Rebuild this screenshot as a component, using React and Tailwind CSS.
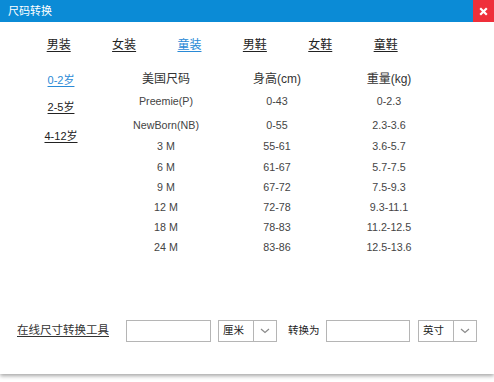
import React from 'react';

const tabs = ['男装', '女装', '童装', '男鞋', '女鞋', '童鞋'];
const ages = [
    ['0-2岁', 'h-[20px]'],
    ['2-5岁', 'h-[34px]'],
    ['4-12岁', 'h-[24px]'],
];

// [size, height, weight, row height]
const rows = [
    ['Preemie(P)', '0-43', '0-2.3', 'h-[25px]'],
    ['NewBorn(NB)', '0-55', '2.3-3.6', 'h-[22px]'],
    ['3 M', '55-61', '3.6-5.7', 'h-[21px]'],
    ['6 M', '61-67', '5.7-7.5', 'h-[20px]'],
    ['9 M', '67-72', '7.5-9.3', 'h-[20px]'],
    ['12 M', '72-78', '9.3-11.1', 'h-[20px]'],
    ['18 M', '78-83', '11.2-12.5', 'h-[20px]'],
    ['24 M', '83-86', '12.5-13.6', 'h-[20px]'],
];

const font = { fontFamily: '"Liberation Sans", "Noto Sans CJK SC", sans-serif' };

const Chevron = () => (
    <svg width="10" height="6" viewBox="0 0 10 6" fill="none">
        <path d="M1 1l4 3.5L9 1" stroke="#8a8a8a" strokeWidth="1.2" />
    </svg>
);

const Select = ({ label }) => (
    <div className="flex h-[22px] w-[59px] border border-[#b5b5b5] bg-white">
        <div className="flex w-[35px] items-center border-r border-[#b5b5b5] pl-[4px] text-[10.5px] text-[#222]">
            {label}
        </div>
        <div className="flex flex-1 items-center justify-center">
            <Chevron />
        </div>
    </div>
);

const App = () => {
    return (
        <div className="h-[382px] w-[494px] bg-white" style={font}>
            <div className="flex h-[374px] flex-col bg-white shadow-[0_2px_4px_rgba(0,0,0,0.35)]">
                {/* Title bar */}
                <div className="flex h-[22px] items-center bg-[#0b8bd6]">
                    <span className="flex-1 pl-[8px] text-[11px] text-white">尺码转换</span>
                    <div className="flex h-[22px] w-[21px] items-center justify-center bg-[#ef2f3a]">
                        <svg width="9" height="9" viewBox="0 0 9 9">
                            <path d="M1.2 1.2l6.6 6.6M7.8 1.2L1.2 7.8" stroke="#fff" strokeWidth="2.2" />
                        </svg>
                    </div>
                </div>

                {/* Category tabs */}
                <div className="mt-[15px] flex h-[16px] pl-[26px]">
                    {tabs.map((t) => (
                        <div key={t} className="flex w-[65.4px] justify-center">
                            <span
                                className={`text-[12px] leading-[16px] underline underline-offset-2 ${
                                    t === '童装' ? 'text-[#2a8ad6]' : 'text-[#222]'
                                }`}
                            >
                                {t}
                            </span>
                        </div>
                    ))}
                </div>

                {/* Body */}
                <div className="mt-[16px] flex">
                    <div className="flex w-[122px] flex-col items-center pt-[1px]">
                        {ages.map(([a, h], i) => (
                            <div key={a} className={`flex items-center ${h}`}>
                                <span
                                    className={`text-[11px] underline underline-offset-2 ${
                                        i === 0 ? 'text-[#2a8ad6]' : 'text-[#222]'
                                    }`}
                                >
                                    {a}
                                </span>
                            </div>
                        ))}
                    </div>

                    <div className="flex flex-col text-[#444]">
                        <div className="flex h-[20px] items-center text-[12px] text-[#333]">
                            <div className="w-[88px] text-center">美国尺码</div>
                            <div className="w-[134px] text-center">身高(cm)</div>
                            <div className="w-[90px] text-center">重量(kg)</div>
                        </div>
                        {rows.map(([s, h, w, rh]) => (
                            <div key={s} className={`flex items-center text-[10.7px] ${rh}`}>
                                <div className="w-[88px] text-center">{s}</div>
                                <div className="w-[134px] text-center">{h}</div>
                                <div className="w-[90px] text-center">{w}</div>
                            </div>
                        ))}
                    </div>
                </div>

                {/* Online converter */}
                <div className="mt-[63px] flex h-[22px] items-center pl-[17px]">
                    <span className="w-[109px] text-[11.5px] text-[#333] underline underline-offset-2">
                        在线尺寸转换工具
                    </span>
                    <div className="h-[22px] w-[85px] border border-[#b5b5b5]" />
                    <div className="ml-[7px]">
                        <Select label="厘米" />
                    </div>
                    <span className="ml-[11px] w-[38px] text-[10.5px] text-[#222]">转换为</span>
                    <div className="h-[22px] w-[84px] border border-[#b5b5b5]" />
                    <div className="ml-[8px]">
                        <Select label="英寸" />
                    </div>
                </div>
            </div>
        </div>
    );
};

export default App;
